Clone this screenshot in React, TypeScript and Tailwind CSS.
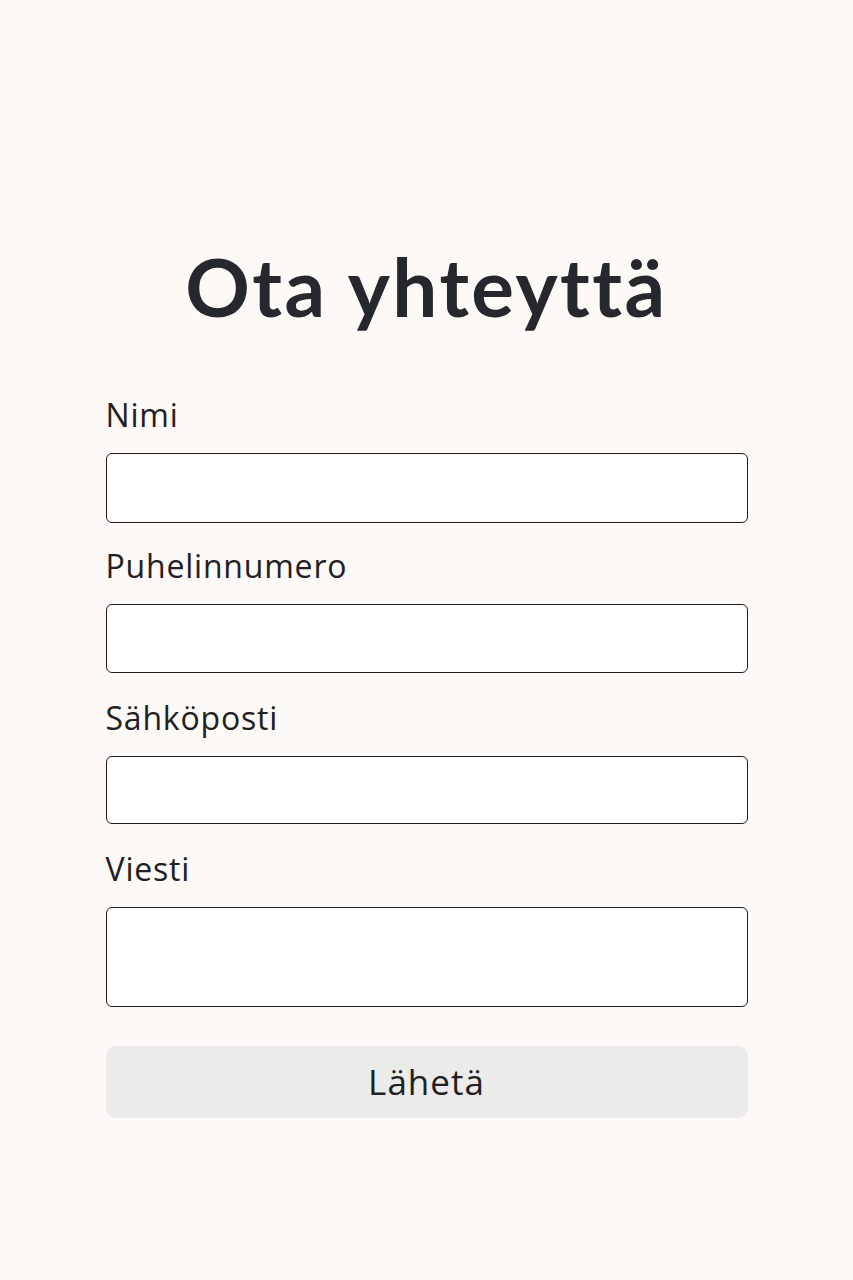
import React from "react";

const fields = [
  { label: "Nimi", h: "h-[70px]", mb: "mb-[23px]" },
  { label: "Puhelinnumero", h: "h-[69px]", mb: "mb-[25px]" },
  { label: "Sähköposti", h: "h-[68px]", mb: "mb-[25px]" },
];

const body = { fontFamily: "'Open Sans', 'Noto Sans', sans-serif" };

export default function App() {
  return (
    <div className="min-h-[1280px] w-full bg-[#fcf9f7] text-[#25262b]">
      <div className="mx-auto flex w-[642px] flex-col pt-[236px]">
        <h1
          className="text-center text-[80px] font-bold leading-[100px] tracking-[2.5px] text-[#27282d]"
          style={{ fontFamily: "Lato, 'Noto Sans', sans-serif" }}
        >
          Ota yhteyttä
        </h1>
        <form className="mt-[59px] flex flex-col" style={body}>
          {fields.map((f) => (
            <div key={f.label} className={`${f.mb} flex flex-col`}>
              <label className="text-[32px] leading-[40px] tracking-[0.8px] text-[#1f2024]">{f.label}</label>
              <input
                className={`mt-[18px] ${f.h} w-full rounded-[6px] border-[1.5px] border-[#1f1f22] bg-white`}
              />
            </div>
          ))}
          <div className="flex flex-col">
            <label className="text-[32px] leading-[40px] tracking-[0.8px] text-[#1f2024]">Viesti</label>
            <textarea className="mt-[18px] h-[100px] w-full resize-none rounded-[6px] border-[1.5px] border-[#1f1f22] bg-white" />
          </div>
          <button
            type="button"
            className="mt-[39px] h-[72px] w-full rounded-[10px] bg-[#ebebea] text-[35px] tracking-[1px] text-[#1f2024]"
            style={body}
          >
            Lähetä
          </button>
        </form>
      </div>
    </div>
  );
}
